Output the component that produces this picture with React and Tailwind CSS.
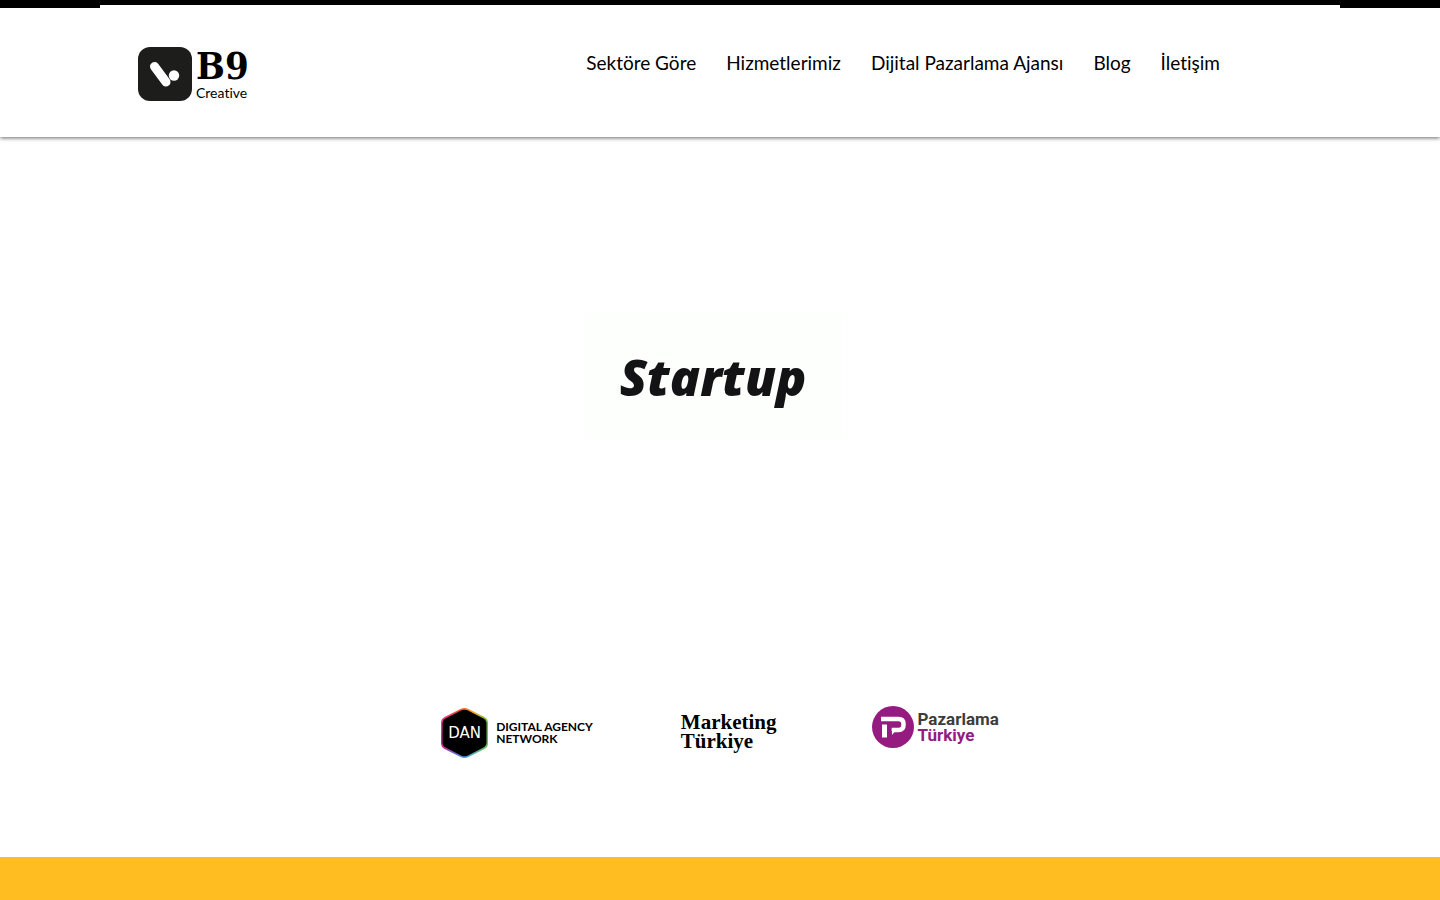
const navLinks = [
  "Sektöre Göre",
  "Hizmetlerimiz",
  "Dijital Pazarlama Ajansı",
  "Blog",
  "İletişim",
]

function Logo() {
  return (
    <a href="#" aria-label="B9 Creative" className="flex items-start gap-1 text-black">
      <svg viewBox="0 0 54 54" className="size-[54px]" aria-hidden="true">
        <rect width="54" height="54" rx="12" fill="#1d1d1b" />
        <path d="M16.500 19.500 L28 35" stroke="#fff" strokeWidth="9" strokeLinecap="round" />
        <circle cx="36" cy="28.500" r="5.200" fill="#fff" />
      </svg>
      <span className="flex flex-col">
        <span className="font-['DejaVu_Serif_Condensed','DejaVu_Serif',serif] text-[38px] leading-[38px] font-bold">
          B9
        </span>
        <span className="text-sm leading-4">Creative</span>
      </span>
    </a>
  )
}

function Header() {
  return (
    <header className="relative bg-white shadow-[0_1px_4px_rgba(0,0,0,0.6)]">
      <div className="h-2 bg-black px-[100px] pt-[5px]">
        <div className="h-[3px] bg-white"></div>
      </div>
      <div className="flex h-[129px] items-start justify-between pr-[220px] pl-[138px] pt-[39px]">
        <Logo />
        <nav className="flex gap-[30px] pt-1 text-[19px] leading-6 text-black">
          {navLinks.map((label) => (
            <a key={label} href="#">
              {label}
            </a>
          ))}
        </nav>
      </div>
    </header>
  )
}

function DigitalAgencyNetwork() {
  return (
    <a href="#" className="flex items-center gap-2 pt-0.5 text-black">
      <span className="relative flex h-[50px] w-[47px] items-center justify-center">
        <svg viewBox="0 0 47 50" className="absolute inset-0" aria-hidden="true">
          <defs>
            <linearGradient id="danTop" x1="0" y1="0" x2="1" y2="0">
              <stop offset="0" stopColor="#e8308a" />
              <stop offset="0.400" stopColor="#f0503a" />
              <stop offset="0.700" stopColor="#f5a623" />
              <stop offset="1" stopColor="#6abf4b" />
            </linearGradient>
            <linearGradient id="danBottom" x1="0" y1="0" x2="1" y2="0">
              <stop offset="0" stopColor="#e0218a" />
              <stop offset="0.250" stopColor="#7a5cc8" />
              <stop offset="0.550" stopColor="#4aa3e0" />
              <stop offset="1" stopColor="#6abf4b" />
            </linearGradient>
          </defs>
          <path
            d="M0 25 V15 Q0 11 3.500 9 L19.500 1 Q23.500 -1 27.500 1 L43.500 9 Q47 11 47 15 V25 Z"
            fill="url(#danTop)"
          />
          <path
            d="M0 25 V35 Q0 39 3.500 41 L19.500 49 Q23.500 51 27.500 49 L43.500 41 Q47 39 47 35 V25 Z"
            fill="url(#danBottom)"
          />
          <path
            d="M1.500 15.500 Q1.500 12 5 10.200 L20 2.600 Q23.500 0.900 27 2.600 L42 10.200 Q45.500 12 45.500 15.500 V34.500 Q45.500 38 42 39.800 L27 47.400 Q23.500 49.100 20 47.400 L5 39.800 Q1.500 38 1.500 34.500 Z"
            fill="#000"
          />
        </svg>
        <span className="relative font-['DejaVu_Sans',sans-serif] text-[15px] leading-4 text-white">
          DAN
        </span>
      </span>
      <span className="text-xs leading-3 font-bold">
        DIGITAL AGENCY
        <br />
        NETWORK
      </span>
    </a>
  )
}

function MarketingTurkiye() {
  return (
    <a
      href="#"
      className="mr-2 font-['Liberation_Serif',serif] text-[21px] leading-[19px] font-bold text-black"
    >
      Marketing
      <br />
      Türkiye
    </a>
  )
}

function PazarlamaTurkiye() {
  return (
    <a href="#" className="flex items-center gap-[3px] self-start">
      <svg viewBox="0 0 42 42" className="size-[42px]" aria-hidden="true">
        <circle cx="21" cy="21" r="21" fill="#951b81" />
        <path
          d="M9 13 H26.500 Q31.500 13 31.500 18 V19 Q31.500 24 26.500 24 H22 V25"
          fill="none"
          stroke="#fff"
          strokeWidth="4.500"
        />
        <path d="M19.800 22 H26 L20 29 Z" fill="#fff" />
        <path d="M12.500 18.500 V31.500" stroke="#fff" strokeWidth="5" />
      </svg>
      <span className="font-[Roboto,sans-serif] text-[17px] leading-4 font-bold text-[#3c3c3b]">
        Pazarlama
        <br />
        <span className="text-[#951b81]">Türkiye</span>
      </span>
    </a>
  )
}

export default function App() {
  return (
    <div className="flex min-h-screen flex-col bg-white font-[Lato,sans-serif] [font-variant-ligatures:none]">
      <Header />
      <main className="flex flex-1 flex-col">
        <section className="flex flex-col items-center pt-[175px] pb-[99px]">
          <div className="mr-[14px] flex h-[129px] w-[258px] items-center justify-center bg-[#fdfffc]">
            <h1 className="font-['Open_Sans',sans-serif] text-[50px] leading-none font-extrabold text-[#131315] italic">
              Startup
            </h1>
          </div>
          <div className="mt-[265px] flex items-center gap-[88px]">
            <DigitalAgencyNetwork />
            <MarketingTurkiye />
            <PazarlamaTurkiye />
          </div>
        </section>
        <section className="min-h-10 flex-1 bg-[#ffbd22]"></section>
      </main>
    </div>
  )
}
